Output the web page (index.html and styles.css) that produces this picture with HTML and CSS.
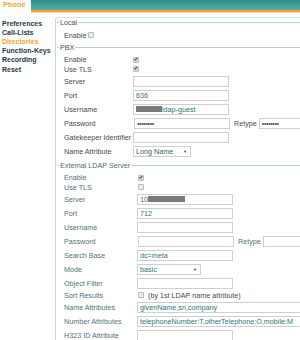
FILE: index.html
```html
<!DOCTYPE html>
<html lang="en">
<head>
    <meta charset="UTF-8">
    <meta name="viewport" content="width=device-width, initial-scale=1.0">
    <title>Phone - Directories</title>
    <link rel="stylesheet" href="styles.css">
</head>
<body>
    <div class="topbar">
        <div class="tab">Phone</div>
        <div class="tab-fill"></div>
    </div>

    <div class="page">
        <ul class="nav">
            <li>Preferences</li>
            <li>Call-Lists</li>
            <li class="active">Directories</li>
            <li>Function-Keys</li>
            <li>Recording</li>
            <li>Reset</li>
        </ul>

        <div class="panel">
            <div class="group local">
                <div class="group-title">Local</div>
                <div class="row check">
                    <span class="lbl">Enable</span>
                    <span class="cb"></span>
                </div>
            </div>

            <div class="group pbx">
                <div class="group-title">PBX</div>
                <div class="row check">
                    <span class="lbl">Enable</span>
                    <span class="cb on"></span>
                </div>
                <div class="row check">
                    <span class="lbl">Use TLS</span>
                    <span class="cb on"></span>
                </div>
                <div class="row">
                    <span class="lbl">Server</span>
                    <input class="txt" type="text" value="">
                </div>
                <div class="row">
                    <span class="lbl">Port</span>
                    <input class="txt" type="text" value="636">
                </div>
                <div class="row">
                    <span class="lbl">Username</span>
                    <div class="txt"><span class="blur" style="width: 26px"></span>ldap-guest</div>
                </div>
                <div class="row">
                    <span class="lbl">Password</span>
                    <input class="txt pw" type="password" value="xxxxxxxx">
                    <span class="retype">Retype</span>
                    <input class="txt short" type="password" value="xxxxxxxx">
                </div>
                <div class="row">
                    <span class="lbl">Gatekeeper Identifier</span>
                    <input class="txt" type="text" value="">
                </div>
                <div class="row">
                    <span class="lbl">Name Attribute</span>
                    <div class="sel name-sel">Long Name<span class="arrow">&#9660;</span></div>
                </div>
            </div>

            <div class="group ldap">
                <div class="group-title">External LDAP Server</div>
                <div class="row check">
                    <span class="lbl">Enable</span>
                    <span class="cb on"></span>
                </div>
                <div class="row check">
                    <span class="lbl">Use TLS</span>
                    <span class="cb"></span>
                </div>
                <div class="row">
                    <span class="lbl">Server</span>
                    <div class="txt">10<span class="blur" style="width: 37px"></span></div>
                </div>
                <div class="row">
                    <span class="lbl">Port</span>
                    <input class="txt" type="text" value="712">
                </div>
                <div class="row">
                    <span class="lbl">Username</span>
                    <input class="txt" type="text" value="">
                </div>
                <div class="row">
                    <span class="lbl">Password</span>
                    <input class="txt pw" type="password" value="">
                    <span class="retype">Retype</span>
                    <input class="txt short" type="password" value="">
                </div>
                <div class="row">
                    <span class="lbl">Search Base</span>
                    <input class="txt" type="text" value="dc=meta">
                </div>
                <div class="row">
                    <span class="lbl">Mode</span>
                    <div class="sel mode-sel">basic<span class="arrow">&#9660;</span></div>
                </div>
                <div class="row">
                    <span class="lbl">Object Filter</span>
                    <input class="txt" type="text" value="">
                </div>
                <div class="row sort">
                    <span class="lbl">Sort Results</span>
                    <span class="cb"></span>
                    <span class="hint">(by 1st LDAP name attribute)</span>
                </div>
                <div class="row">
                    <span class="lbl">Name Attributes</span>
                    <input class="txt wide" type="text" value="givenName,sn,company">
                </div>
                <div class="row">
                    <span class="lbl">Number Attributes</span>
                    <input class="txt wide" type="text" value="telephoneNumber:T,otherTelephone:O,mobile:M">
                </div>
                <div class="row">
                    <span class="lbl">H323 ID Attribute</span>
                    <input class="txt" type="text" value="">
                </div>
            </div>
        </div>
    </div>
</body>
</html>
```

FILE: styles.css
```css
/* Phone settings page, small scale */
html, body {
    overflow: hidden;
}
body {
    margin: 0;
    font-family: "Liberation Sans", Arial, sans-serif;
    font-size: 7.2px;
    color: #444;
    background-color: #fff;
}

/* top tab bar */
.topbar {
    display: flex;
    height: 12px;
}
.tab {
    width: 28px;
    padding-left: 3px;
    line-height: 10px;
    font-size: 7.4px;
    font-weight: bold;
    color: #f2a32e;
    background-color: #fff;
}
.tab-fill {
    flex: 1;
    height: 10px;
    background: linear-gradient(#2b8f8b, #5ea9a6);
    border-bottom: 2px solid #f2a232;
    box-shadow: 0 1px 0 #f9d8a2;
}

.page {
    display: flex;
    margin-top: 5px;
}

/* left navigation */
.nav {
    flex: none;
    list-style-type: none;
    margin: 0;
    padding: 1.5px 0 0 2px;
    width: 53px;
}
.nav li {
    line-height: 9.2px;
    font-size: 7px;
    font-weight: bold;
    color: #1e3947;
    white-space: nowrap;
}
.nav li.active {
    color: #f2a32e;
}

/* content panel */
.panel {
    flex: 1;
    min-width: 0;
    overflow: hidden;
    border-top: 1px solid #d3e2e2;
    border-left: 1px solid #c7dada;
    border-top-left-radius: 3px;
    min-height: 330px;
}
.group + .group {
    margin-top: 2.5px;
}
.group-title {
    display: flex;
    align-items: center;
    height: 9px;
    margin-bottom: 3.5px;
    color: #4a4f52;
}
.group-title::before {
    content: "";
    width: 2px;
    margin: 0 1px 0 1px;
    border-top: 1px solid #b6d2d2;
}
.group-title::after {
    content: "";
    flex: 1;
    margin-left: 1px;
    border-top: 1px solid #b6d2d2;
}
.ldap .group-title {
    color: #4f6d74;
}

/* form rows */
.row {
    display: flex;
    align-items: center;
    height: 14px;
    padding-left: 8px;
    white-space: nowrap;
}
.row.check {
    height: 9.5px;
}
.row.sort {
    height: 10.5px;
}
.lbl {
    flex: none;
    color: #3f4b50;
}
.local .lbl {
    margin-right: 2px;
}
.pbx .lbl {
    width: 69px;
}
.ldap .lbl {
    width: 73px;
    color: #51707a;
}

.txt {
    box-sizing: border-box;
    flex: none;
    width: 96px;
    height: 11px;
    margin: 0;
    padding: 0 2px;
    border: 1px solid #cfcfcf;
    border-radius: 0;
    font-family: inherit;
    font-size: 7.2px;
    line-height: 9px;
    color: #2b7675;
    background-color: #fff;
    outline: none;
}
div.txt {
    display: flex;
    align-items: center;
}
.txt.pw {
    margin-left: 1px;
    color: #555;
    letter-spacing: -0.4px;
}
.txt.short {
    width: 60px;
    color: #555;
    letter-spacing: -0.4px;
}
.txt.wide {
    width: 180px;
}
.retype {
    margin: 0 2px 0 4px;
    color: #3f4b50;
}
.ldap .retype {
    color: #51707a;
}
.blur {
    display: inline-block;
    height: 6px;
    background-color: #7a7a7a;
}

.sel {
    box-sizing: border-box;
    flex: none;
    display: flex;
    align-items: center;
    justify-content: space-between;
    height: 11px;
    padding: 0 3px 0 2px;
    border: 1px solid #cfcfcf;
    color: #2b7675;
}
.name-sel {
    width: 58px;
    color: #3e5a60;
}
.mode-sel {
    width: 64px;
    margin-top: 1px;
}
.arrow {
    font-size: 4px;
    color: #2f4c55;
}

/* checkboxes */
.cb {
    box-sizing: border-box;
    flex: none;
    display: inline-block;
    position: relative;
    width: 6px;
    height: 6px;
    border: 1px solid #b9b9b9;
    border-radius: 1px;
    background-color: #ececec;
}
.cb.on {
    background-color: #d6d6d6;
    border-color: #bdbdbd;
}
.cb.on::after {
    content: "\2714";
    position: absolute;
    left: 0;
    top: -2px;
    font-size: 5px;
    color: #222;
}
.ldap .row .cb {
    margin-left: 1px;
}
.hint {
    margin-left: 4px;
    color: #3f4b50;
}
```
